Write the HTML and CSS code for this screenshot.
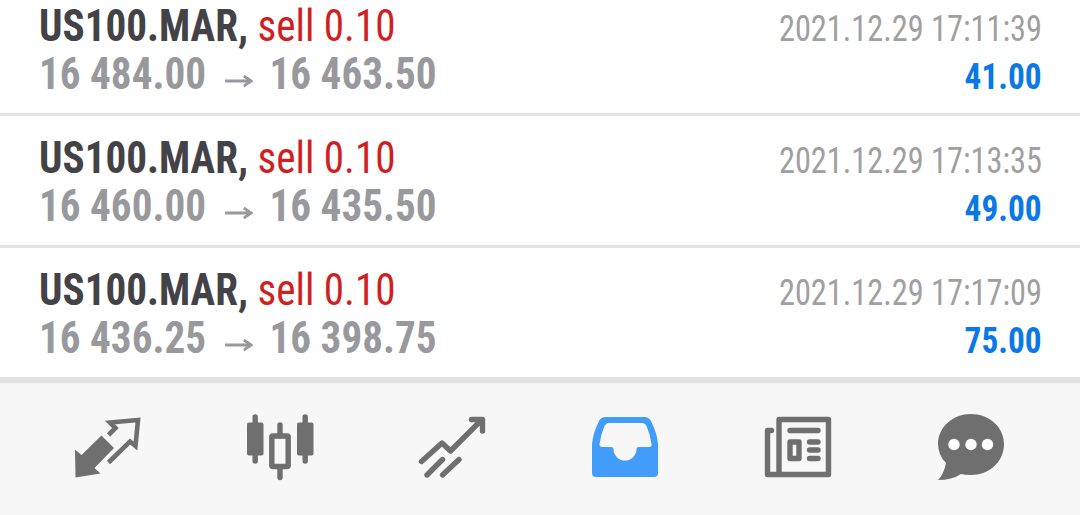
FILE: index.html
```html
<!DOCTYPE html>
<html lang="en">
<head>
<meta charset="utf-8">
<title>History</title>
<link rel="stylesheet" href="styles.css">
</head>
<body>

<div class="deals">
  <div class="deal">
    <div class="line"><span class="name"><b>US100.MAR,</b> <span class="sell">sell 0.10</span></span><span class="time">2021.12.29 17:11:39</span></div>
    <div class="line"><span class="price"><span>16 484.00</span><svg class="arrow" viewBox="0 0 30 16"><path d="M0 8H28M20 3L28 8L20 13"/></svg><span>16 463.50</span></span><span class="profit">41.00</span></div>
  </div>
  <div class="deal">
    <div class="line"><span class="name"><b>US100.MAR,</b> <span class="sell">sell 0.10</span></span><span class="time">2021.12.29 17:13:35</span></div>
    <div class="line"><span class="price"><span>16 460.00</span><svg class="arrow" viewBox="0 0 30 16"><path d="M0 8H28M20 3L28 8L20 13"/></svg><span>16 435.50</span></span><span class="profit">49.00</span></div>
  </div>
  <div class="deal">
    <div class="line"><span class="name"><b>US100.MAR,</b> <span class="sell">sell 0.10</span></span><span class="time">2021.12.29 17:17:09</span></div>
    <div class="line"><span class="price"><span>16 436.25</span><svg class="arrow" viewBox="0 0 30 16"><path d="M0 8H28M20 3L28 8L20 13"/></svg><span>16 398.75</span></span><span class="profit">75.00</span></div>
  </div>
</div>

<div class="tabs">
  <!-- quotes -->
  <svg class="tab" viewBox="0 0 100 100">
    <path class="fill" d="M15 49.500L21.500 55L41.500 35.500L54 48L34.500 68L40.500 73.500L15.500 77.500Z"/>
    <path class="thin" d="M48.500 35L55.500 28L50 22.500L78 20L75.500 46L70 41.500L48.500 62.500"/>
  </svg>
  <!-- chart -->
  <svg class="tab" viewBox="2 0 100 100">
    <rect class="fill" x="17" y="22.500" width="16.500" height="33" rx="2"/>
    <rect class="fill" x="67" y="22.500" width="16.500" height="33" rx="2"/>
    <path class="line5" d="M25.200 17V61M75.200 17V61M50 25V36M50 67V77.500"/>
    <rect class="line5" x="41.800" y="36" width="16.400" height="30.500" rx="1"/>
  </svg>
  <!-- trade -->
  <svg class="tab" viewBox="4 0 100 100">
    <path class="line5" d="M21.500 61.500L42 43L50.500 51L81 20.500M71.500 19.500H82.500V31M27 75L42.500 59.500M42.500 75L59 59.500"/>
  </svg>
  <!-- history -->
  <svg class="tab on" viewBox="1 0 100 100">
    <path class="fill" fill-rule="evenodd" d="M31 17H69Q74 17 76 21Q82 33 83 44V73Q83 77 79 77H21Q17 77 17 73V44Q18 33 24 21Q26 17 31 17ZM34 23Q31 23 29.500 26Q26 34 24.500 44Q24.500 47 27 47H36Q38.500 47 38.500 49A11.500 11.500 0 0 0 61.500 49Q61.500 47 64 47H74Q77 47 76.500 44Q75 34 71.500 26Q70 23 67 23Z"/>
  </svg>
  <!-- news -->
  <svg class="tab" viewBox="-2 0 100 100">
    <path class="line5" d="M21.500 30.500H17.500V74.500H78.500V19.500H29V74"/>
    <path class="line5" d="M40 30.500H68M59.500 42H68M59.500 50H68M59.500 58.500H68"/>
    <rect class="line5" x="40" y="42" width="9" height="16.500"/>
  </svg>
  <!-- messages -->
  <svg class="tab" viewBox="0 0 100 100">
    <path class="fill" d="M51 14C69 14 84 27 84 44C84 62 69 75 51 75Q45 75 41 74Q32 80 18 80Q24 74 26 63Q18 55 18 44C18 27 33 14 51 14Z"/>
    <g class="dots"><circle cx="34" cy="44.500" r="5.700"/><circle cx="51" cy="44.500" r="5.700"/><circle cx="67.500" cy="44.500" r="5.700"/></g>
  </svg>
</div>

</body>
</html>
```

FILE: styles.css
```css
body {margin:0; height:515px; overflow:hidden; background:#fff; font-family:"Roboto Condensed",Roboto,"Liberation Sans",sans-serif; font-stretch:75%;}

.deals {height:377px; display:flex; flex-direction:column; justify-content:flex-end; overflow:hidden;}
.deal {flex:none; height:129px; box-sizing:border-box; padding:18px 38px 0 39px; border-bottom:0 solid #e4e4e4;}
.deal:not(:last-child) {height:132px; border-bottom-width:3px;}
.line {display:flex; justify-content:space-between; align-items:baseline; height:48px; line-height:49px; white-space:nowrap;}
.name, .price {transform:scaleX(.935); transform-origin:left;}
.time {transform:scaleX(.874); transform-origin:right;}
.profit {transform:scaleX(.9); transform-origin:right;}
.name {font-size:44px; color:#434247;}
.name b {font-weight:700;}
.sell {color:#d01f22;}
.price {display:flex; align-items:baseline; font-size:44px; font-weight:700; color:#98999d;}
.arrow {width:30px; height:16px; margin:0 18px 0 20px; fill:none; stroke:#98999d; stroke-width:2.8;}
.time {font-size:37px; color:#a0a0a0;}
.profit {font-size:37px; font-weight:700; color:#0b78e8;}

.tabs {height:132px; display:flex; gap:72px; padding-left:60px; background:#f7f7f7; border-top:6px solid #e2e2e2;}
.tab {flex:none; width:100px; height:100px; margin-top:17px; color:#6f6f6f;}
.on {color:#419df9;}
.fill {fill:currentColor;}
.line5 {fill:none; stroke:currentColor; stroke-width:5.4; stroke-linecap:round; stroke-linejoin:round;}
.thin {fill:none; stroke:currentColor; stroke-width:4.6;}
.dots {fill:#fff;}
```
